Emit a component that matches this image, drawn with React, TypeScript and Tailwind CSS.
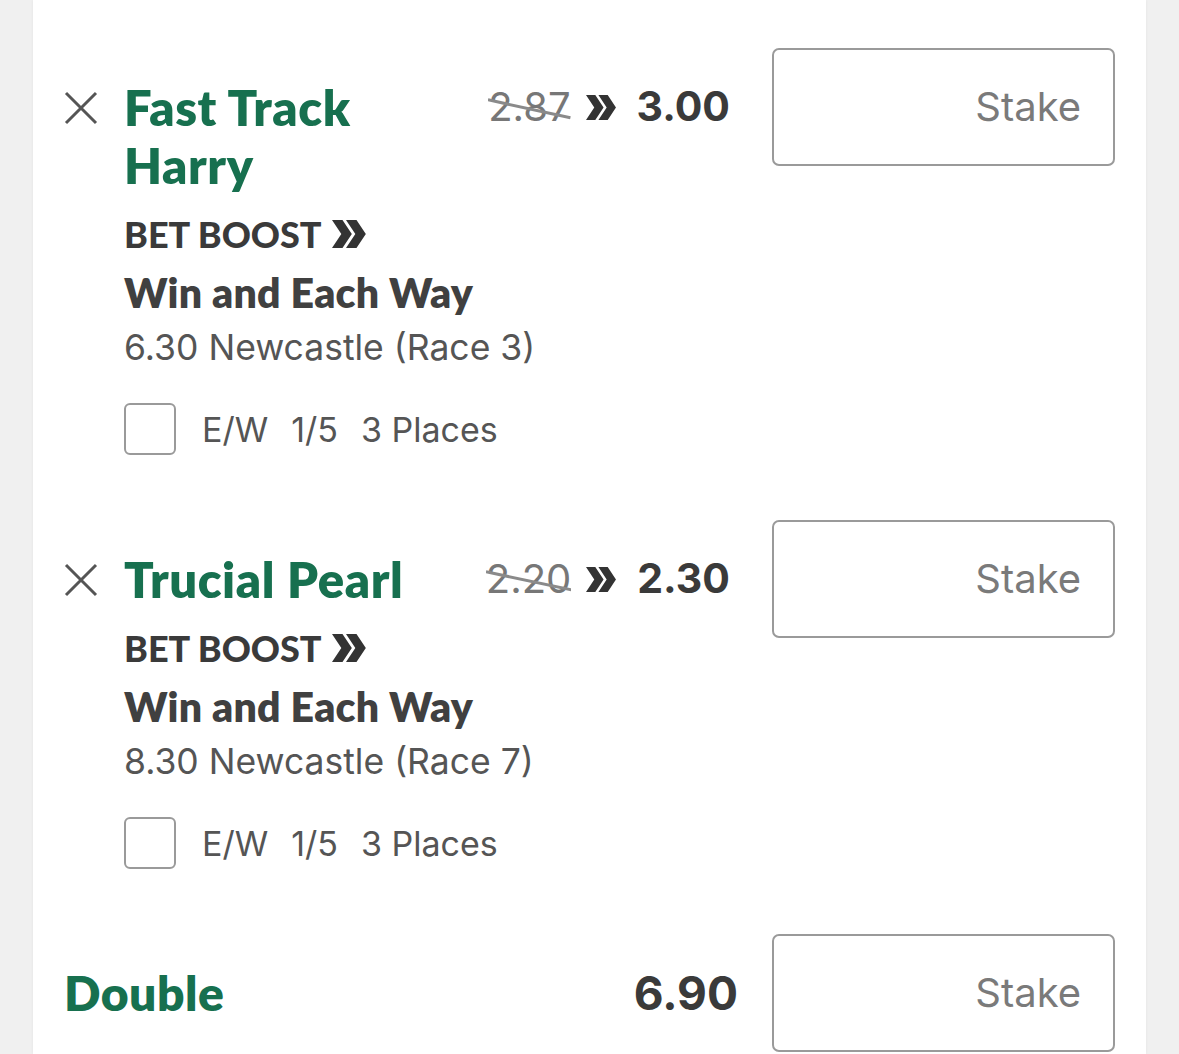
import React from 'react';

const GREEN = 'text-[#17704f]';

const CloseIcon = () => (
  <svg width="34" height="34" viewBox="0 0 34 34" className="block">
    <path d="M2 2 L32 32 M32 2 L2 32" stroke="#555" strokeWidth="3" fill="none" />
  </svg>
);

const Chevrons = ({ w, h }: { w: number; h: number }) => (
  <svg width={w} height={h} viewBox="0 0 30 24" className="block" preserveAspectRatio="none">
    <polygon points="0,0 9,0 17,12 9,24 0,24 8,12" fill="#333" />
    <polygon points="12,0 21,0 29,12 21,24 12,24 20,12" fill="#333" />
  </svg>
);

const StakeBox = () => (
  <div className="ml-[42px] flex h-[118px] w-[343px] shrink-0 items-center justify-end rounded-[7px] border-2 border-[#9a9a9a] pr-[32px]">
    <span className="font-['Inter',sans-serif] text-[40px] text-[#7a7a7a]">Stake</span>
  </div>
);

type Bet = {
  name: string;
  was: string;
  now: string;
  race: string;
};

const bets: Bet[] = [
  { name: 'Fast Track Harry', was: '2.87', now: '3.00', race: '6.30 Newcastle (Race 3)' },
  { name: 'Trucial Pearl', was: '2.20', now: '2.30', race: '8.30 Newcastle (Race 7)' },
];

const BetRow = ({ bet }: { bet: Bet }) => (
  <div className="flex items-start">
    <div className="flex w-[60px] shrink-0 pt-[43px]">
      <CloseIcon />
    </div>
    <div className="min-w-0 flex-1 pt-[30px]">
      <div className="flex items-start">
        <div className={`max-w-[340px] font-['Lato',sans-serif] text-[49px] font-extrabold leading-[58px] tracking-[0.012em] ${GREEN}`}>
          {bet.name}
        </div>
        <div className="ml-auto flex h-[58px] items-center font-['Inter',sans-serif]">
          <span className="relative text-[40px] text-[#777]">
            {bet.was}
            <svg className="absolute inset-0 h-full w-full" viewBox="0 0 100 100" preserveAspectRatio="none">
              <line x1="0" y1="38" x2="100" y2="68" stroke="#8a8a8a" vectorEffect="non-scaling-stroke" style={{ strokeWidth: 3 }} />
            </svg>
          </span>
          <span className="ml-[15px] mr-[20px]">
            <Chevrons w={31} h={25} />
          </span>
          <span className="text-[41px] font-bold text-[#3a3a3a]">{bet.now}</span>
        </div>
      </div>
      <div className="mt-[20px] flex h-[40px] items-center gap-[10px] font-['Lato',sans-serif] text-[36px] font-black text-[#3a3a3a]">
        <span>BET BOOST</span>
        <Chevrons w={35} h={28} />
      </div>
      <div className="mt-[19px] font-['Lato',sans-serif] text-[41px] font-extrabold leading-[40px] tracking-[0.005em] text-[#404040]">
        Win and Each Way
      </div>
      <div className="mt-[15px] whitespace-nowrap font-['Inter',sans-serif] text-[35.5px] leading-[40px] text-[#555]">
        {bet.race}
      </div>
      <div className="mt-[35px] flex items-center">
        <div className="h-[52px] w-[52px] rounded-[6px] border-2 border-[#9a9a9a]" />
        <div className="ml-[26px] flex gap-[23px] font-['Inter',sans-serif] text-[34px] text-[#555]">
          <span>E/W</span>
          <span>1/5</span>
          <span>3 Places</span>
        </div>
      </div>
    </div>
    <StakeBox />
  </div>
);

export default function App() {
  return (
    <div className="h-[1054px] overflow-hidden bg-[#f0f0f0]">
      <div className="mx-[33px] h-full bg-white pl-[31px] pr-[31px] pt-[48px] shadow-[0_0_3px_rgba(0,0,0,0.06)]">
        <div className="flex flex-col gap-[65px]">
          {bets.map((b) => (
            <BetRow key={b.name} bet={b} />
          ))}
          <div className="flex items-start">
            <div className={`flex-1 pt-[30px] font-['Lato',sans-serif] text-[48px] font-extrabold leading-[58px] tracking-[0.01em] ${GREEN}`}>
              Double
            </div>
            <div className="flex h-[118px] items-center font-['Inter',sans-serif] text-[46px] font-bold text-[#3a3a3a]">
              <span className="-mr-[8px]">6.90</span>
            </div>
            <StakeBox />
          </div>
        </div>
      </div>
    </div>
  );
}
